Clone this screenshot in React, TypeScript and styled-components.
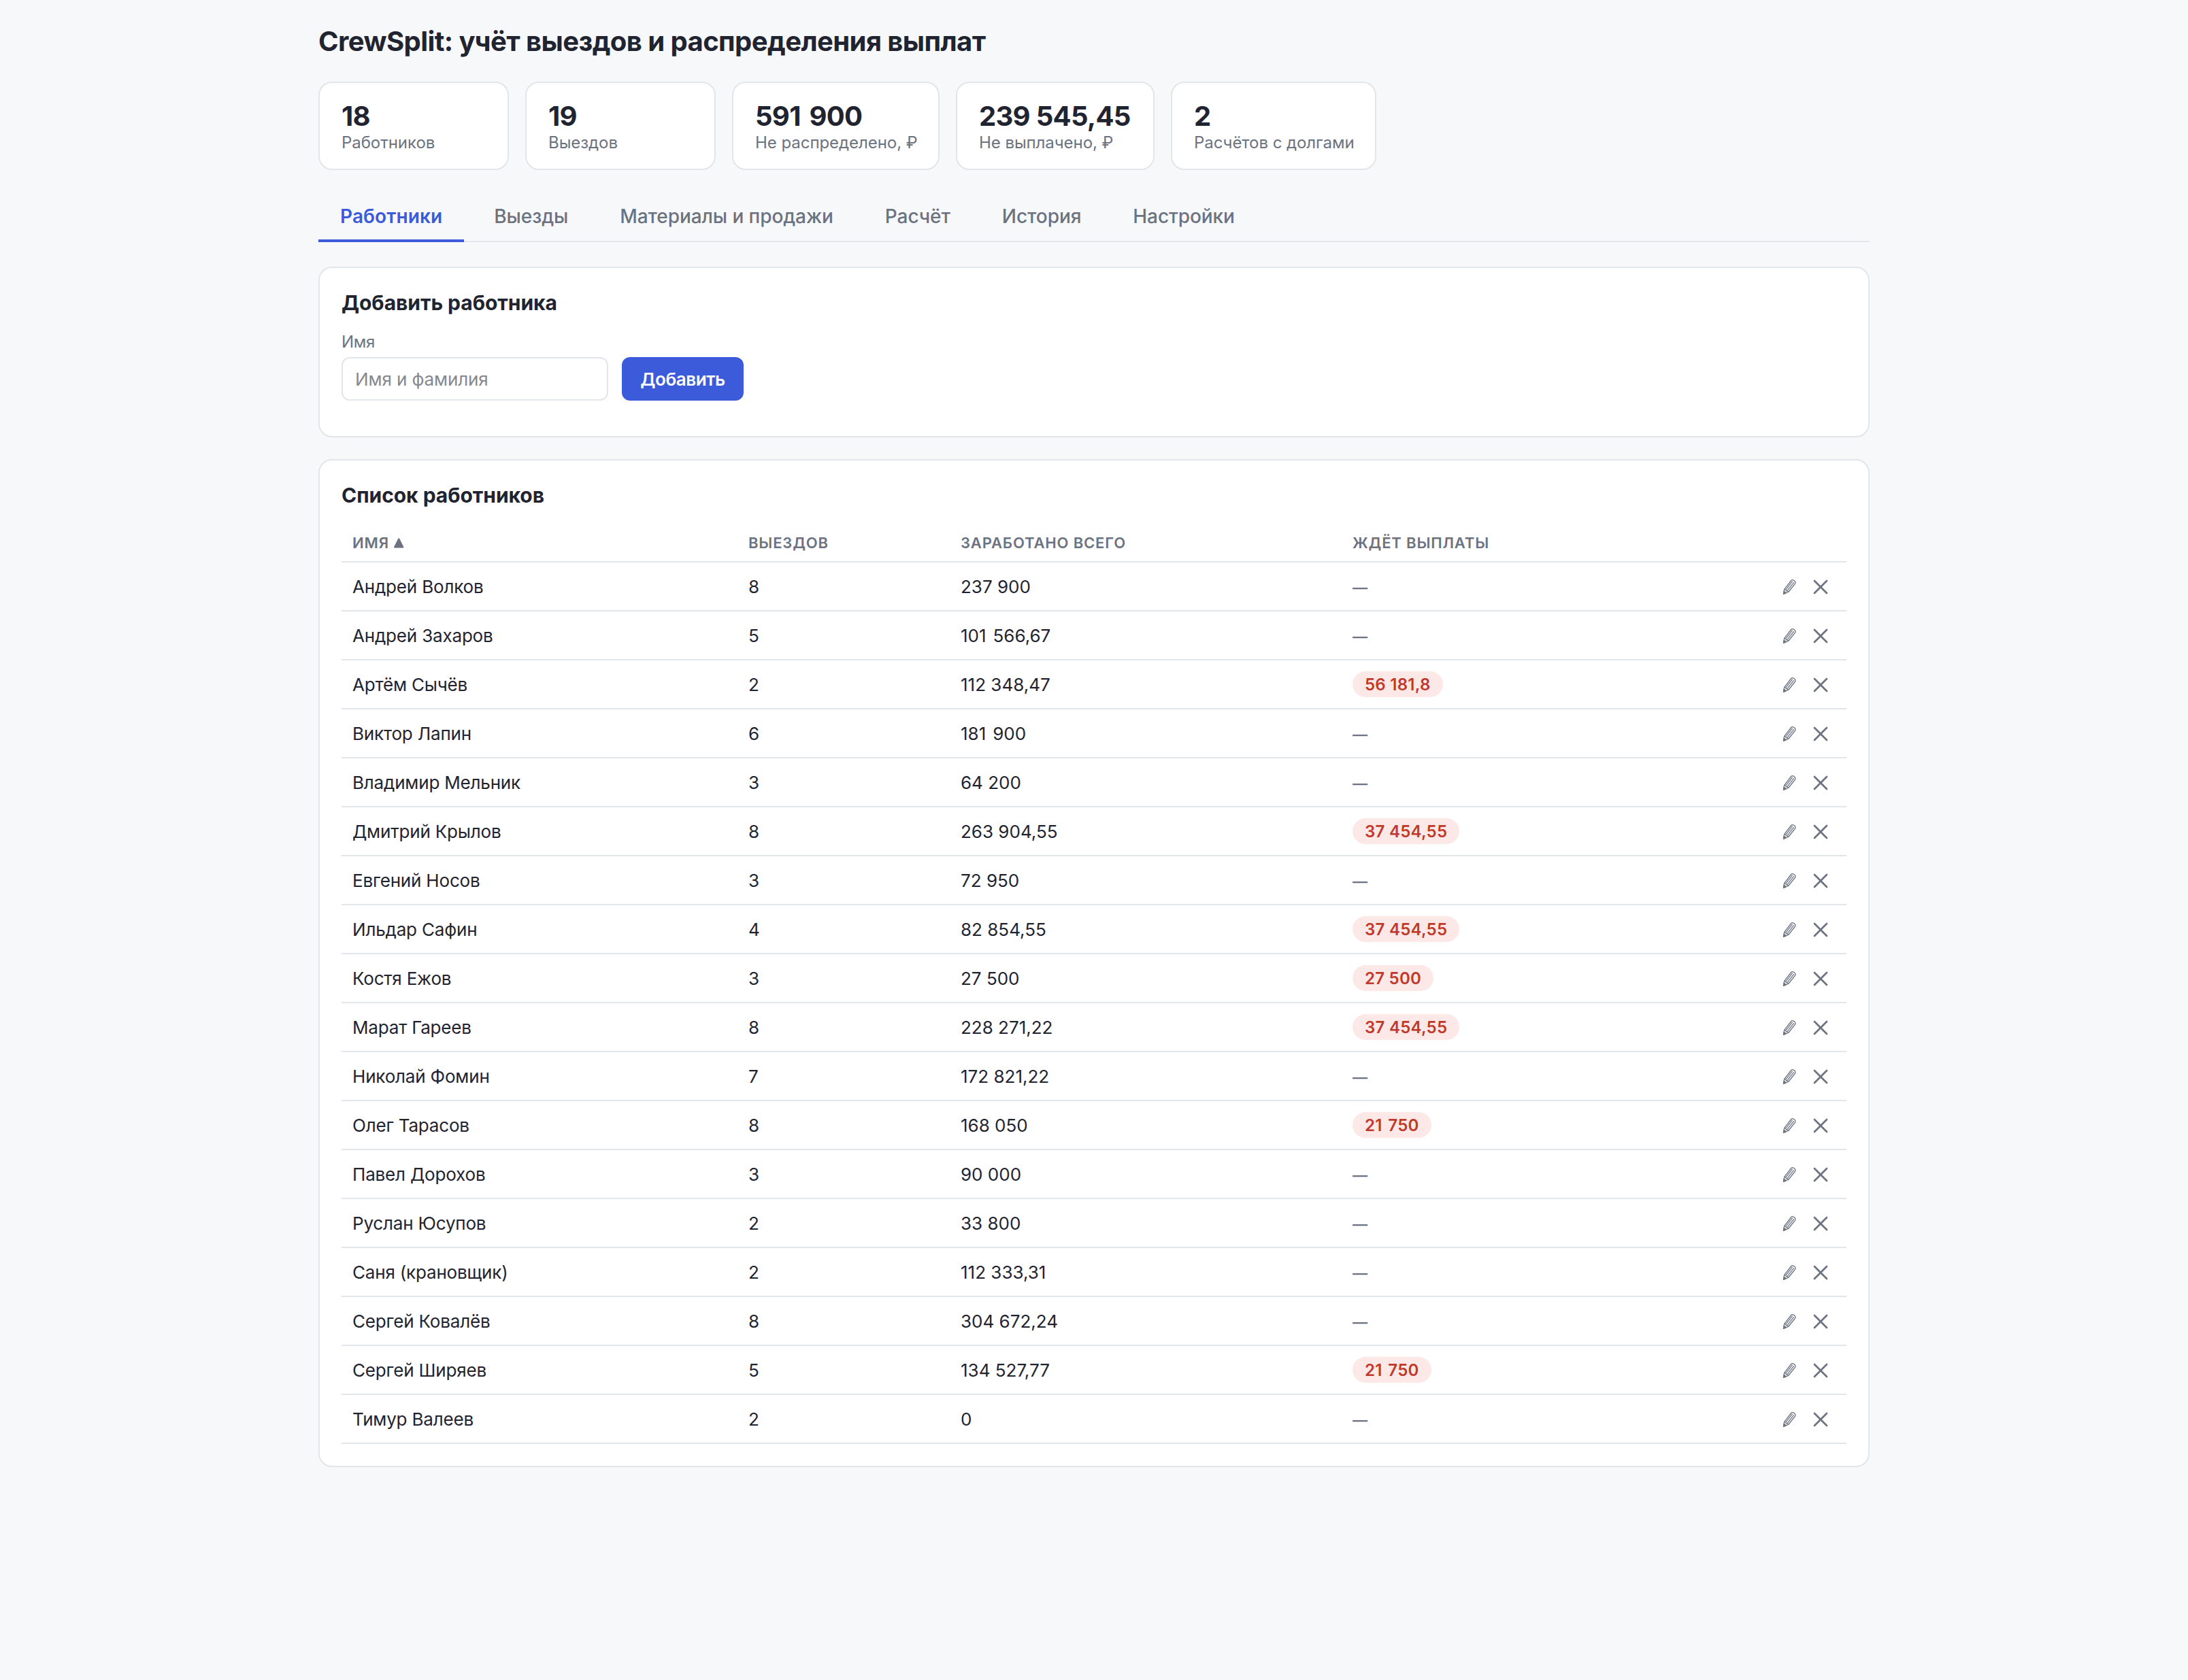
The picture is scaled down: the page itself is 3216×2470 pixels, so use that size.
import React from 'react'
import styled, { createGlobalStyle } from 'styled-components';

const GlobalStyle = createGlobalStyle`
* {
  box-sizing: border-box;
}
body {
  margin: 0;
  background: #f7f8fa;
  color: #1f2430;
  font-family: Inter, "Liberation Sans", sans-serif;
  font-size: 26px;
}
`;

const Page = styled.main`
width: 2280px;
margin: 0 auto;
padding-top: 32px;
`;

const Title = styled.h1`
margin: 0 0 30px;
height: 58px;
line-height: 58px;
font-size: 40px;
font-weight: 700;
letter-spacing: -0.57px;
white-space: nowrap;
`;

const Stats = styled.div`
display: flex;
gap: 24px;
`;

const StatCard = styled.div<{ $width: number }>`
width: ${({ $width }) => $width}px;
height: 130px;
padding: 24px 0 24px 32px;
background: #fff;
border: 2px solid #e2e5ea;
border-radius: 20px;
white-space: nowrap;
`;

interface AmountProps {
  $value: string;
}

const groupGap = ({ $value }: AmountProps) => ($value.includes('1 ') ? '0.1em' : '0');

const StatValue = styled.div<AmountProps>`
height: 50px;
line-height: 50px;
font-size: 40px;
font-weight: 700;
letter-spacing: -0.7px;
word-spacing: ${groupGap};
`;

const StatLabel = styled.div`
height: 28px;
line-height: 28px;
font-size: 24px;
letter-spacing: -0.05px;
color: #6b7280;
`;

const Tabs = styled.nav`
display: flex;
gap: 12px;
height: 74px;
margin-top: 32px;
box-shadow: inset 0 -2px #e2e5ea;
`;

const Tab = styled.button<{ $active?: boolean }>`
padding: 2px 32px 0;
border: 0;
border-bottom: 4px solid ${({ $active }) => ($active ? '#3b5bdb' : 'transparent')};
background: none;
color: ${({ $active }) => ($active ? '#3b5bdb' : '#6b7280')};
font-family: inherit;
font-size: 28px;
font-weight: ${({ $active }) => ($active ? 600 : 500)};
letter-spacing: ${({ $active }) => ($active ? '0.1px' : '-0.08px')};
white-space: nowrap;
`;

const Panel = styled.section<{ $height: number }>`
height: ${({ $height }) => $height}px;
margin-top: ${({ $height }) => ($height > 1000 ? 32 : 36)}px;
padding: 31px 32px;
background: #fff;
border: 2px solid #e2e5ea;
border-radius: 20px;
`;

const PanelTitle = styled.h2`
margin: 0;
height: 40px;
line-height: 40px;
font-size: 30px;
font-weight: 700;
letter-spacing: -0.04px;
`;

const Form = styled.div`
display: flex;
align-items: flex-end;
gap: 20px;
margin-top: 19px;
`;

const Field = styled.label`
display: flex;
flex-direction: column;
gap: 4px;
font-size: 24px;
line-height: 37px;
letter-spacing: -0.3px;
color: #6b7280;
`;

const Input = styled.input`
width: 392px;
height: 64px;
padding: 0 18px;
border: 2px solid #e2e5ea;
border-radius: 12px;
background: #fff;
font-family: inherit;
font-size: 26px;
letter-spacing: -0.1px;

&::placeholder {
  color: #85888f;
}
`;

const AddButton = styled.button`
width: 179px;
height: 64px;
padding: 0;
border: 0;
border-radius: 12px;
background: #3b5bdb;
color: #fff;
font-family: inherit;
font-size: 26px;
font-weight: 600;
letter-spacing: -0.4px;
`;

const Table = styled.div`
margin-top: 23px;
`;

const Row = styled.div`
display: grid;
grid-template-columns: 582px 312px 576px 1fr auto;
align-items: center;
height: 72px;
padding: 0 26px 0 16px;
border-bottom: 2px solid #e2e5ea;
`;

const HeadRow = styled(Row)`
height: 56px;
color: #6b7280;
font-size: 22px;
font-weight: 600;
letter-spacing: 0.85px;
text-transform: uppercase;
`;

const HeadCell = styled.div`
display: flex;
align-items: center;
gap: 6px;
`;

const Cell = styled.div`
white-space: nowrap;
`;

const NameCell = styled(Cell)`
letter-spacing: -0.18px;
`;

const AmountCell = styled(Cell)<AmountProps>`
word-spacing: ${groupGap};
`;

const Empty = styled.span`
color: #6b7280;
font-size: 22px;
font-weight: 600;
`;

const Badge = styled.span<AmountProps>`
display: block;
width: fit-content;
height: 38px;
padding: 0 18px;
border-radius: 20px;
background: #fce8e7;
color: #c0392b;
font-size: 24px;
font-weight: 600;
line-height: 39px;
letter-spacing: 0.25px;
word-spacing: ${groupGap};
`;

const Actions = styled.div`
display: flex;
gap: 22px;
padding-top: 2px;
color: #6b7280;
`;

const IconButton = styled.button`
display: flex;
padding: 0;
border: 0;
background: none;
color: inherit;
`;

const SortIcon = () => (
  <svg width="17" height="17" viewBox="0 0 17 17">
    <path d="M8.2 2.2 14.4 14.4H2Z" fill="currentColor" stroke="currentColor" strokeWidth="2" strokeLinejoin="round" />
  </svg>
)

const PencilIcon = () => (
  <svg width="24" height="24" viewBox="0 0 24 24" fill="none" stroke="currentColor" strokeWidth="1.25" strokeLinejoin="round">
    <path d="M3.4 22.3 4.7 15.3 14.7 2.5Q16.3 0.8 19 2.6 21.9 4.8 20.6 7L10.6 19.5Z" />
    <path d="M6.7 16.2 16.6 3.6M8.7 17.8 18.8 5.2M4.7 15.3 6.7 16.2 7.3 17.8 8.7 17.8 10.6 19.5" />
    <path d="M3.4 22.3 4.1 18.2 7.4 20.7Z" fill="currentColor" />
  </svg>
)

const CloseIcon = () => (
  <svg width="24" height="24" viewBox="0 0 24 24" fill="none" stroke="currentColor" strokeWidth="2.7" strokeLinecap="round">
    <path d="M3 3 21 21M21 3 3 21" />
  </svg>
)

const stats = [
  { value: '18', label: 'Работников', width: 280 },
  { value: '19', label: 'Выездов', width: 280 },
  { value: '591 900', label: 'Не распределено, ₽', width: 305 },
  { value: '239 545,45', label: 'Не выплачено, ₽', width: 292 },
  { value: '2', label: 'Расчётов с долгами', width: 302 },
];

const tabs = ['Работники', 'Выезды', 'Материалы и продажи', 'Расчёт', 'История', 'Настройки'];

type Worker = {
  name: string;
  trips: number;
  earned: string;
  pending?: string;
}

const workers: Worker[] = [
  { name: 'Андрей Волков', trips: 8, earned: '237 900' },
  { name: 'Андрей Захаров', trips: 5, earned: '101 566,67' },
  { name: 'Артём Сычёв', trips: 2, earned: '112 348,47', pending: '56 181,8' },
  { name: 'Виктор Лапин', trips: 6, earned: '181 900' },
  { name: 'Владимир Мельник', trips: 3, earned: '64 200' },
  { name: 'Дмитрий Крылов', trips: 8, earned: '263 904,55', pending: '37 454,55' },
  { name: 'Евгений Носов', trips: 3, earned: '72 950' },
  { name: 'Ильдар Сафин', trips: 4, earned: '82 854,55', pending: '37 454,55' },
  { name: 'Костя Ежов', trips: 3, earned: '27 500', pending: '27 500' },
  { name: 'Марат Гареев', trips: 8, earned: '228 271,22', pending: '37 454,55' },
  { name: 'Николай Фомин', trips: 7, earned: '172 821,22' },
  { name: 'Олег Тарасов', trips: 8, earned: '168 050', pending: '21 750' },
  { name: 'Павел Дорохов', trips: 3, earned: '90 000' },
  { name: 'Руслан Юсупов', trips: 2, earned: '33 800' },
  { name: 'Саня (крановщик)', trips: 2, earned: '112 333,31' },
  { name: 'Сергей Ковалёв', trips: 8, earned: '304 672,24' },
  { name: 'Сергей Ширяев', trips: 5, earned: '134 527,77', pending: '21 750' },
  { name: 'Тимур Валеев', trips: 2, earned: '0' },
];

function App() {
  return (
    <Page>
      <GlobalStyle />
      <Title>CrewSplit: учёт выездов и распределения выплат</Title>
      <Stats>
        {stats.map((stat) => (
          <StatCard key={stat.label} $width={stat.width}>
            <StatValue $value={stat.value}>{stat.value}</StatValue>
            <StatLabel>{stat.label}</StatLabel>
          </StatCard>
        ))}
      </Stats>
      <Tabs>
        {tabs.map((tab, i) => (
          <Tab key={tab} $active={i === 0}>{tab}</Tab>
        ))}
      </Tabs>
      <Panel $height={251}>
        <PanelTitle>Добавить работника</PanelTitle>
        <Form>
          <Field>
            Имя
            <Input placeholder="Имя и фамилия" />
          </Field>
          <AddButton>Добавить</AddButton>
        </Form>
      </Panel>
      <Panel $height={1482}>
        <PanelTitle>Список работников</PanelTitle>
        <Table>
          <HeadRow>
            <HeadCell>Имя <SortIcon /></HeadCell>
            <HeadCell>Выездов</HeadCell>
            <HeadCell>Заработано всего</HeadCell>
            <HeadCell>Ждёт выплаты</HeadCell>
          </HeadRow>
          {workers.map((worker) => (
            <Row key={worker.name}>
              <NameCell>{worker.name}</NameCell>
              <Cell>{worker.trips}</Cell>
              <AmountCell $value={worker.earned}>{worker.earned}</AmountCell>
              <Cell>
                {worker.pending ? <Badge $value={worker.pending}>{worker.pending}</Badge> : <Empty>—</Empty>}
              </Cell>
              <Actions>
                <IconButton><PencilIcon /></IconButton>
                <IconButton><CloseIcon /></IconButton>
              </Actions>
            </Row>
          ))}
        </Table>
      </Panel>
    </Page>
  )
}

export default App
